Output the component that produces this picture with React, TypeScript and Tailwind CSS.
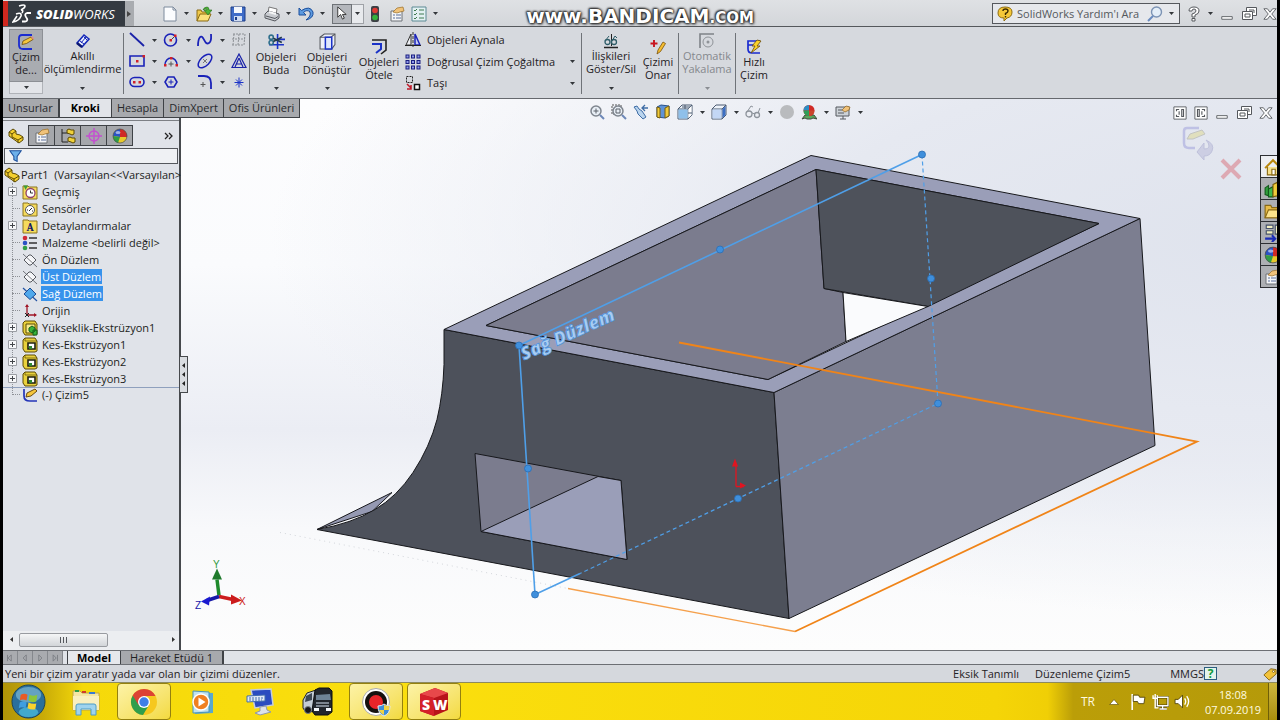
import React from "react";
import { clsx } from "clsx";

type IconProps = { className?: string; children?: React.ReactNode };

const Icon: React.FC<IconProps> = ({ className = "size-4", children }) => (
  <svg viewBox="0 0 16 16" fill="none" className={clsx("shrink-0", className)} aria-hidden="true">
    {children}
  </svg>
);

const Caret: React.FC<{ label: string; className?: string; muted?: boolean }> = ({
  label,
  className = "w-[18px]",
  muted,
}) => (
  <button aria-label={label} className={clsx("flex shrink-0 items-center justify-center", className)}>
    <svg viewBox="0 0 5 3" className="h-[3px] w-[5px]" aria-hidden="true">
      <path d="M0 0h5L2.5 3z" fill={muted ? "#8a8d92" : "#33363a"} />
    </svg>
  </button>
);

const Separator = () => <div className="mx-px my-1 w-px shrink-0 bg-[#6f7378]" />;

/* ---------- Icons ---------- */

const SketchIcon = ({ className }: { className?: string }) => (
  <Icon className={className}>
    <path d="M14 1H4Q1 1 1 4v7q0 4 4 4h9" stroke="#1a2bd0" strokeWidth="1.8" />
    <path d="M4 10.500 5 7 13 3l2 2.500L8.500 9.500z" fill="#f5c63c" stroke="#6f4c08" strokeWidth=".8" />
    <path d="M13 3 15 5.500 16 4.500 14.500 2.300z" fill="#e08a8a" />
  </Icon>
);

const DimensionIcon = () => (
  <Icon>
    <path d="M2 10 9 2l5 4-7 8z" fill="#eef2ff" stroke="#1528b8" strokeWidth="1.6" />
    <path d="m5 8 4 3M9 4l3 3M6 10l5-6" stroke="#1528b8" />
    <path d="m2 10 5 4" stroke="#0c1770" strokeWidth="2.400" />
  </Icon>
);

const sketchTools: { name: string; icon: React.ReactNode; menu: boolean }[] = [
  { name: "Çizgi", menu: true, icon: <Icon><path d="m1 1 14 13" stroke="#1a22a8" strokeWidth="1.8" /></Icon> },
  {
    name: "Daire",
    menu: true,
    icon: (
      <Icon>
        <circle cx="7.500" cy="8" r="6" stroke="#1a22b8" strokeWidth="1.6" />
        <path d="m8 8 4-4" stroke="#444" />
        <path d="M6.500 7h2.500v2.500H6.500zM11 2.500h2.500V5H11z" fill="#d0202a" />
      </Icon>
    ),
  },
  {
    name: "Eğri",
    menu: true,
    icon: <Icon><path d="M1 14C1 5 4 3 6 6s3 7 6 5 2-6 2-9" stroke="#1a22b8" strokeWidth="1.8" /></Icon>,
  },
  {
    name: "Düzlem",
    menu: false,
    icon: (
      <Icon>
        <path d="M2 2h12M1 7h13M1 13h12M3 2 2 13M8 2 7 13M14 2l-1 11" stroke="#8c9095" strokeDasharray="2 1" />
      </Icon>
    ),
  },
  {
    name: "Dikdörtgen",
    menu: true,
    icon: (
      <Icon>
        <path d="M1 3h14v10H1z" stroke="#1a22b8" strokeWidth="1.6" />
        <path d="M7 7h2.500v2.500H7zM13.500 2H16v2.500h-2.500z" fill="#d0202a" />
      </Icon>
    ),
  },
  {
    name: "Yay",
    menu: true,
    icon: (
      <Icon>
        <path d="M2 12a6 7 0 0 1 12 0" stroke="#1a22b8" strokeWidth="1.500" />
        <path d="M1 11h2.500v2.500H1zM12.500 11H15v2.500h-2.500zM7 4h2.500v2.500H7z" fill="#d0202a" />
        <path d="M8 8.500v5M5.500 11h5" stroke="#555" />
      </Icon>
    ),
  },
  {
    name: "Elips",
    menu: true,
    icon: (
      <Icon>
        <ellipse cx="8" cy="8" rx="8.500" ry="4.500" transform="rotate(-45 8 8)" stroke="#1a22b8" strokeWidth="1.500" />
        <path d="m6 6 4 4m0-4-4 4" stroke="#777" />
      </Icon>
    ),
  },
  {
    name: "Metin",
    menu: false,
    icon: (
      <Icon>
        <path d="M8 1 15 14.500H1zM8 5l4 9M8 5l-4 9M5 11h6" stroke="#1a22a8" strokeWidth="1.200" />
      </Icon>
    ),
  },
  {
    name: "Yuva",
    menu: true,
    icon: (
      <Icon>
        <rect x="1" y="3.500" width="14" height="9" rx="4.500" stroke="#1a22b8" strokeWidth="1.600" />
        <path d="M4 7h2.500v2.500H4zM9.500 7H12v2.500H9.500z" fill="#d0202a" />
      </Icon>
    ),
  },
  {
    name: "Çokgen",
    menu: false,
    icon: (
      <Icon>
        <path d="M5 3h6l3 5-3 5H5L2 8z" stroke="#1a22b8" strokeWidth="1.600" />
        <path d="M8 5.500v5M5.500 8h5" stroke="#1a22b8" />
      </Icon>
    ),
  },
  {
    name: "Radyus",
    menu: true,
    icon: (
      <Icon>
        <path d="M1 2h6q7 0 7 7v6" stroke="#1a22b8" strokeWidth="1.800" />
        <path d="M6 8v5M3.500 10.500h5" stroke="#555" />
      </Icon>
    ),
  },
  {
    name: "Nokta",
    menu: false,
    icon: <Icon><path d="M8 3.500v10M3.500 8.500h9M5 5.500l6 6m0-6-6 6" stroke="#1a32c8" /></Icon>,
  },
];

const TrimIcon = () => (
  <Icon className="size-[17px]">
    <path d="M1 11h14M9 1v14M9 6h7" stroke="#1a32c8" strokeWidth="1.500" />
    <circle cx="3" cy="4" r="2" stroke="#2f6f8c" strokeWidth="1.500" />
    <circle cx="3" cy="9" r="2" stroke="#2f6f8c" strokeWidth="1.500" />
    <path d="m5 5 8 4m-8-1 8-4" stroke="#223a4c" strokeWidth="1.500" />
  </Icon>
);

const ConvertIcon = () => (
  <Icon className="size-[17px]">
    <path d="m1 4 4-3h10v10l-3 4H1z" fill="#eef0f8" stroke="#55585e" />
    <path d="M1 4h10v11M11 4l4-3" stroke="#55585e" />
    <path d="M6 4v11h6V4z" fill="#dfe6fb" stroke="#1a32c8" strokeWidth="1.400" />
  </Icon>
);

const OffsetIcon = () => (
  <Icon>
    <path d="M1 1h14v10l-5 4" stroke="#222" strokeWidth="1.600" />
    <path d="M1 5h9v5l-5 4" stroke="#1a32c8" strokeWidth="2" />
  </Icon>
);

const MirrorIcon = () => (
  <Icon>
    <path d="M8 0v16" stroke="#333" strokeDasharray="3 1" />
    <path d="M6 2v11H1z" fill="#eceef2" stroke="#333" />
    <path d="M10 2v11h5z" fill="#c4ccf4" stroke="#1a22b8" strokeWidth="1.500" />
    <path d="M0 13.500h16" stroke="#222" />
  </Icon>
);

const PatternIcon = () => (
  <Icon>
    {[1, 6.5, 12].map((y) =>
      [1, 6.5, 12].map((x) => (
        <rect key={`${x}-${y}`} x={x} y={y} width="3" height="3" fill="#8f98e8" stroke="#1a1f80" />
      )),
    )}
  </Icon>
);

const MoveIcon = () => (
  <Icon>
    <path d="M1.500 1.500h6v6h-6z" stroke="#222" strokeDasharray="2 1" />
    <path d="M9.500 9.500h5v5h-5z" fill="#fff" stroke="#111" strokeWidth="1.500" />
    <path d="m2 9 4 4m0-3v4H2" stroke="#c01828" strokeWidth="1.500" />
  </Icon>
);

const RelationsIcon = () => (
  <Icon>
    <path d="M1 14.500h14" stroke="#222" strokeWidth="1.500" />
    <path d="M8.500 1v12" stroke="#222" />
    <circle cx="4.500" cy="9" r="2.500" stroke="#2f5d68" strokeWidth="1.300" />
    <circle cx="11" cy="9" r="2.500" stroke="#2f5d68" strokeWidth="1.300" />
    <path d="M2 8 6 3M9 8l3-5 2 2" stroke="#2f5d68" />
  </Icon>
);

const RepairIcon = () => (
  <Icon>
    <path d="M4 1v7M.500 4.500h7" stroke="#c8141e" strokeWidth="1.900" />
    <path d="m7 15 1-4 5-8 2.500 1.500-5 8z" fill="#f5bd30" stroke="#7a5208" strokeWidth=".8" />
  </Icon>
);

const SnapIcon = () => (
  <Icon>
    <path d="M1 15V1h14" stroke="#7f8388" strokeWidth="1.600" />
    <circle cx="9" cy="9" r="5" stroke="#8f9398" />
    <circle cx="9" cy="9" r="1.500" fill="#8f9398" />
  </Icon>
);

const RapidIcon = () => (
  <Icon>
    <path d="M14 2H2v8q0 4 4 4h8M2 6h6" stroke="#1a2bd0" strokeWidth="1.700" />
    <path d="M11 1 6 7h3l-4 7 9-7h-3l4-5z" fill="#fbd32a" stroke="#6b4a05" strokeWidth=".8" />
  </Icon>
);

const PartIcon = () => (
  <Icon>
    <path d="m1 4 4-3 3 2v3l4 1 3 2v3l-4 3L1 8z" fill="#f4cf2e" stroke="#5c4a05" />
    <path d="m1 4 3 2 4-3M4 6v3l6 3 5-3M10 12v3" stroke="#5c4a05" />
  </Icon>
);

const PropertyIcon = () => (
  <Icon>
    <path d="M2 5h11v10H2z" fill="#f4f5f7" stroke="#6d7076" />
    <path d="M4 9h2M4 12h2M7 9h5M7 12h5" stroke="#5b6e9a" />
    <path d="m4 6 4-4 6-1 1 4-4 1-3 1z" fill="#f0c27a" stroke="#9a6d24" strokeWidth=".7" />
  </Icon>
);

const ConfigIcon = () => (
  <Icon>
    <path d="M2 1v13h6M2 5h6" stroke="#222" />
    <path d="m7 2 2-1 2 1h3v4l-2 1-2-1-3-1zM8 10l2-1 2 1h3v4l-2 1-2-1-3-1z" fill="#f0d23a" stroke="#5c4a05" />
  </Icon>
);

const DimXpertIcon = () => (
  <Icon>
    <circle cx="8" cy="8" r="5" stroke="#c44fd0" strokeWidth="1.400" />
    <path d="M8 0v16M0 8h16" stroke="#c44fd0" strokeWidth="1.400" />
  </Icon>
);

const BallIcon = ({ className }: { className?: string }) => (
  <Icon className={className}>
    <circle cx="8" cy="8" r="7" fill="#e8c92c" />
    <path d="M8 9 9 1a7 7 0 0 0-8 7z" fill="#2a52c4" />
    <path d="M8 9 8 1a7 7 0 0 1 7 8z" fill="#d02a26" />
    <path d="M8 9 1 8a7 7 0 0 0 5 7z" fill="#2f9e46" />
    <circle cx="8" cy="8" r="7" stroke="#4a4d52" strokeWidth=".7" />
    <ellipse cx="6" cy="4.500" rx="2.500" ry="1.500" fill="#fff" opacity=".55" />
  </Icon>
);

const FolderIcon = ({ children }: { children: React.ReactNode }) => (
  <Icon>
    <path d="M1 4V2h5l1 1h8v12H1z" fill="#f6db5c" stroke="#8a7420" />
    {children}
  </Icon>
);

const HistoryIcon = () => (
  <FolderIcon>
    <circle cx="8.500" cy="9" r="4.500" fill="#fff" stroke="#8e3f6a" strokeWidth="1.300" />
    <path d="M8.500 6.500V9H11" stroke="#333" />
    <path d="M1.500 1.500H6L3.500 6z" fill="#3aa03a" />
  </FolderIcon>
);

const SensorIcon = () => (
  <FolderIcon>
    <circle cx="8" cy="9" r="4.500" fill="#fff" stroke="#555" />
    <path d="m7 10 3-3M5 9h1m4 1h1" stroke="#222" />
  </FolderIcon>
);

const AnnotationIcon = () => (
  <FolderIcon>
    <text x="8" y="13" textAnchor="middle" className="fill-[#111a66] font-serif text-[11px] font-bold">
      A
    </text>
  </FolderIcon>
);

const MaterialIcon = () => (
  <Icon>
    <path d="M7 3h8M7 8h8M7 13h8" stroke="#333" strokeWidth="1.500" />
    <circle cx="3" cy="3" r="2.300" fill="#d02a36" />
    <circle cx="3" cy="8" r="2.300" fill="#2a52c4" />
    <circle cx="3" cy="13" r="2.300" fill="#2f9e46" />
  </Icon>
);

const PlaneIcon = () => (
  <Icon>
    <path d="M7 3h2l5 5-5 5H7L2 8z" fill="#f4f5f8" stroke="#55585e" />
    <path d="m1 2 14 13" stroke="#55585e" strokeWidth=".8" />
    <path d="m6 5 5 5" stroke="#fff" />
  </Icon>
);

const PlaneActiveIcon = () => (
  <Icon>
    <path d="M1 2l14 13" stroke="#2454a4" strokeWidth="1.200" />
    <path d="M8 2 14 8l-6 5.500L2 8z" fill="#4fa8ec" stroke="#1c4c94" />
  </Icon>
);

const OriginIcon = () => (
  <Icon>
    <path d="M5 2v10h9" stroke="#a01828" strokeWidth="1.300" />
    <path d="m3 4 2-3 2 3zM12 10l3 2-3 2z" fill="#a01828" />
    <path d="m3 10 4 4m0-4-4 4" stroke="#222" />
  </Icon>
);

const ExtrudeIcon = () => (
  <Icon>
    <path d="M1 3 3 1h10l2 3v10l-2 1H3l-2-3z" fill="#e9d13c" stroke="#5c4a05" />
    <path d="M4 4h9v9H4z" fill="#f7ea8a" stroke="#5c4a05" />
    <path d="m7 8 3-2 3 2v3l-3 2-3-2zM11 10h4v5h-4z" fill="#38b43a" stroke="#12601a" />
  </Icon>
);

const CutIcon = () => (
  <Icon>
    <path d="M1 3 3 1h10l2 3v10l-2 1H3l-2-3z" fill="#e9d13c" stroke="#5c4a05" />
    <path d="M3 4V1M3 4h12" stroke="#5c4a05" strokeWidth=".7" />
    <path d="M6 6h7v6H6z" fill="#fff" stroke="#1e1e10" strokeWidth="1.600" />
    <path d="M7 9h3v3H7z" fill="#2d8a32" />
  </Icon>
);

const SketchTreeIcon = () => (
  <Icon>
    <path d="M2 2v7q0 5 6 5h7" stroke="#2334b8" strokeWidth="1.700" />
    <path d="m4 10 1-4 8-4 2 2-6 5z" fill="#f5c63c" stroke="#5a3c05" strokeWidth=".9" />
  </Icon>
);

const LensIcon = ({ area }: { area?: boolean }) => (
  <Icon>
    {area && <path d="M1 1h9v9H1z" stroke="#555" strokeDasharray="2 1" />}
    <circle cx="7" cy="7" r="5" fill="#e8eef5" stroke="#7e858e" strokeWidth="1.500" />
    <path d={area ? "M5 5h4v4H5z" : "M7 4.500v5M4.500 7h5"} stroke="#5c626a" />
    <path d="m11 11 4 4" stroke="#6d88b8" strokeWidth="2" />
  </Icon>
);

const PreviousViewIcon = () => (
  <Icon>
    <path d="m1 3 3-1 2 3 3 2 4 6-3 2-5-5-1-3z" fill="#b9d4ee" stroke="#3f6da6" />
    <path d="M15 4H9m3-3L9 4l3 3" stroke="#3f6da6" strokeWidth="1.300" />
  </Icon>
);

const SectionIcon = () => (
  <Icon>
    <path d="m2 3 4-2 8 1v10l-4 2-8-1z" fill="#5f93d8" stroke="#28528c" />
    <path d="M2 3v10l3 1V4zM10 4v10l4-2V2z" fill="#f0cb3c" stroke="#7a5f0c" />
  </Icon>
);

const CubeIcon = ({ framed }: { framed?: boolean }) => (
  <Icon>
    <path d="m1 5 4-4h10v10l-4 4H1z" fill="#eef3fa" stroke="#4b5a70" />
    <path d="M1 5h10v10M11 5l4-4" stroke="#4b5a70" />
    <path d="M1.500 5.500h9v9h-9z" fill={framed ? "#8fc0ea" : "#c3d7f5"} />
    <path d="m11.500 5 3-3v9l-3 3z" fill={framed ? "#fff" : "#3c6fc4"} />
    {framed && <path d="M8 1v4M11 9h4M5 3h8" stroke="#4b5a70" />}
  </Icon>
);

const GlassesIcon = () => (
  <Icon>
    <circle cx="4" cy="10" r="3" stroke="#8d939b" strokeWidth="1.300" />
    <circle cx="12" cy="11" r="2.500" stroke="#8d939b" strokeWidth="1.300" />
    <path d="m2 8 4-6 2 1M7 9l3 1M13 9l2-5" stroke="#8d939b" />
  </Icon>
);

const SceneIcon = () => (
  <Icon>
    <path d="m1 15 3-4h9l3 4-4-1-2 1H6l-2-1z" fill="#5aa65a" stroke="#3f4a3f" />
    <circle cx="8" cy="6.500" r="5.500" fill="#d02a26" />
    <path d="M8 6.500V1a5.500 5.500 0 0 0-5.500 5.500z" fill="#2a8ec4" />
    <path d="M8 6.500H2.500A5.500 5.500 0 0 0 8 12z" fill="#2f9e56" />
    <path d="M8 6.500h5.500A5.500 5.500 0 0 1 8 12z" fill="#c9452c" />
  </Icon>
);

const ViewSettingsIcon = () => (
  <Icon>
    <path d="M1 3h13v9H1zM5 15h6M8 12v3" fill="#cdd2d8" stroke="#55585e" />
    <path d="M3 6h4M3 9h6" stroke="#55585e" />
    <path d="m7 6 4-4 4 1-1 3-4 2z" fill="#f0c27a" stroke="#8a6020" strokeWidth=".7" />
  </Icon>
);

const MinimizeGlyph = () => (
  <Icon className="size-[14px]">
    <path d="M2 11h12v3H2z" fill="#fff" stroke="#55585d" />
  </Icon>
);

const RestoreGlyph = () => (
  <Icon>
    <path d="M5.500 1.500h10v8h-10z" fill="#fff" stroke="#55585d" />
    <path d="M1.500 5.500h10v8h-10z" fill="#fff" stroke="#55585d" />
    <path d="M4 8h5v3H4zM8 4h5v3" stroke="#55585d" />
  </Icon>
);

const CloseGlyph = () => (
  <Icon className="size-[14px]">
    <path d="M1 2h4l3 4 3-4h4l-5 6 5 6h-4l-3-4-3 4H1l5-6z" fill="#fff" stroke="#55585d" />
  </Icon>
);

const PaneGlyph = ({ flip }: { flip?: boolean }) => (
  <Icon className="size-[14px]">
    <path d="M1 1h14v14H1z" fill="#fff" stroke="#55585d" />
    <path
      d={flip ? "M4 4h2v8H4zM9 4h3v2M12 10v2H9M9 6v4" : "M10 4h2v8h-2zM7 4H4v2M4 10v2h3M7 6v4"}
      stroke="#55585d"
      strokeWidth="1.300"
    />
  </Icon>
);

/* ---------- Title bar ---------- */

const quickTools: { name: string; icon: React.ReactNode }[] = [
  {
    name: "Yeni",
    icon: (
      <Icon>
        <path d="M2 1h9l3 3v11H2z" fill="#fbfcfe" stroke="#7d8a9c" />
        <path d="M11 1v3h3" stroke="#7d8a9c" />
      </Icon>
    ),
  },
  {
    name: "Aç",
    icon: (
      <Icon>
        <path d="M1 15V4h4l1 2h7v3" fill="#f0c84a" stroke="#8a6a14" />
        <path d="m1 15 3-7h11l-3 7z" fill="#fbe07a" stroke="#8a6a14" />
        <path d="M7 4q1-3 4-3 2 0 2 3h3l-4 5-4-5h3q0-1-1-1-2 0-3 1z" fill="#4fb53a" stroke="#256a18" strokeWidth=".6" />
      </Icon>
    ),
  },
  {
    name: "Kaydet",
    icon: (
      <Icon>
        <path d="M1 1h14v14H2l-1-1z" fill="#3f6cc8" stroke="#1d3c86" />
        <path d="M4 1h8v6H4z" fill="#f4f7fc" />
        <path d="M4 10h8v5H4z" fill="#cfdcf2" />
        <path d="M5 11h2v3H5z" fill="#1d3c86" />
      </Icon>
    ),
  },
  {
    name: "Yazdır",
    icon: (
      <Icon>
        <path d="m4 7 1-6 8 2-1 6z" fill="#fff" stroke="#777" />
        <path d="m1 8 3-3 11 3v4l-4 3L1 12z" fill="#c9ccd1" stroke="#55585e" />
        <path d="m2 10 9 2.500 3-2" stroke="#55585e" />
        <path d="m5 6 7 2" stroke="#f5f6f7" strokeWidth="2" />
      </Icon>
    ),
  },
  {
    name: "Geri Al",
    icon: (
      <Icon>
        <path d="M1 2v7h7L5.500 6.500Q9 3 12 6q1.500 4-4 8 8-2 7-8Q12-1 3.500 4.500z" fill="#5b9ae0" stroke="#1d4f9c" />
      </Icon>
    ),
  },
];

const TitleBar = () => (
  <header className="relative flex h-[27px] shrink-0 items-center border-b border-[#55585c] bg-gradient-to-b from-[#dfe1e4] to-[#d3d6da] pt-px">
    <div className="flex h-full items-center border-l-[5px] border-[#d0281f] bg-[#343a41] pr-2.5 pl-1 text-white">
      <svg viewBox="0 0 20 20" className="mr-1 size-5" fill="none" aria-hidden="true">
        <path d="M7 2q6-2 6 0 0 2-4 4 3 0 1 3" stroke="#fff" strokeWidth="1.600" />
        <path d="M4 10q6-2 5 2-2 5-8 6l4-6" stroke="#fff" strokeWidth="1.600" />
        <path d="M19 9h-4q-3 1-1 4 3 4-1 4.500h-3" stroke="#fff" strokeWidth="1.800" />
      </svg>
      <span className="font-['Open_Sans',sans-serif] text-[13px] leading-4 font-extrabold italic">
        SOLID<span className="font-medium">WORKS</span>
      </span>
    </div>
    <button aria-label="Menü" className="flex h-full w-[9px] items-center justify-center bg-[#a9acb0]">
      <svg viewBox="0 0 4 6" className="h-1.5 w-1" aria-hidden="true">
        <path d="M0 0v6l4-3z" fill="#444" />
      </svg>
    </button>

    <div className="ml-7 flex items-center">
      {quickTools.map((tool) => (
        <div key={tool.name} className="flex items-center">
          <button aria-label={tool.name}>{tool.icon}</button>
          <Caret label={`${tool.name} seçenekleri`} />
        </div>
      ))}
      <button
        aria-label="Seç"
        className="flex h-5 w-5 items-center justify-center border border-[#6e7277] bg-[#b4b7bc]"
      >
        <Icon className="size-[15px]">
          <path d="M4 1v11l3-3 2 5 2-1-2-4h4z" fill="#fff" stroke="#333" />
        </Icon>
      </button>
      <Caret label="Seçim seçenekleri" className="h-5 w-3 border border-l-0 border-[#9fa2a7] bg-[#e8eaed]" />
      <button aria-label="Yeniden Oluştur" className="ml-[3px]">
        <Icon>
          <rect x="4" y="0" width="8" height="16" rx="2" fill="#3b3f44" />
          <circle cx="8" cy="4.500" r="2.800" fill="#e03a34" />
          <circle cx="8" cy="11.500" r="2.800" fill="#35b13c" />
        </Icon>
      </button>
      <button aria-label="Seçenekler" className="ml-1.5">
        <PropertyIcon />
      </button>
      <button aria-label="Liste" className="ml-1.5">
        <Icon>
          <path d="M1 1h14v14H1z" fill="#e2f0f2" stroke="#5c8a94" />
          <path d="m3 4 1 1 2-2M3 8l1 1 2-2M3 12l1 1 2-2M8 4h5M8 8h5M8 12h5" stroke="#3f7a50" />
        </Icon>
      </button>
      <Caret label="Liste seçenekleri" />
    </div>

    <div className="ml-auto flex items-center">
      <label className="mr-1.5 flex h-[21px] w-[188px] items-center border border-[#55585d] bg-[#e6e8ec] px-1">
        <Icon>
          <path d="M1 7q0-6 7-6t7 5-5 6l-3 3v-3Q1 12 1 7z" fill="#f5c838" stroke="#8f6d10" />
          <path d="M6 5q0-2 2.500-2T11 5q0 1.500-2.500 2.500V9M8.500 10v1.500" stroke="#3d2c00" strokeWidth="1.400" />
        </Icon>
        <input
          aria-label="SolidWorks Yardım'ı Ara"
          placeholder="SolidWorks Yardım'ı Ara"
          className="ml-1 w-[130px] bg-transparent text-[11px] leading-4 outline-none placeholder:text-[#55585d]"
        />
        <Icon>
          <circle cx="9.500" cy="6" r="5" fill="#e4eef8" stroke="#7c93b4" strokeWidth="1.400" />
          <path d="m6 10-5 5" stroke="#6b8cc0" strokeWidth="2" />
        </Icon>
        <Caret label="Arama seçenekleri" className="ml-0.5 w-3" />
      </label>
      <button aria-label="Yardım">
        <Icon>
          <path d="M3 5q0-4 5-4t5 4q0 3-4 4v2H6V8q4-1 4-3T8 3 6 5zM6 12.500h3V15H6z" fill="#fff" stroke="#55585d" />
        </Icon>
      </button>
      <Caret label="Yardım seçenekleri" className="w-4" />
      <button aria-label="Simge durumuna küçült" className="ml-0.5">
        <MinimizeGlyph />
      </button>
      <button aria-label="Önceki boyut" className="ml-[7px]">
        <RestoreGlyph />
      </button>
      <button aria-label="Kapat" className="ml-1.5">
        <CloseGlyph />
      </button>
    </div>

    {/* Recorder watermark */}
    <div className="pointer-events-none absolute inset-x-0 top-1 text-center font-['DejaVu_Sans',sans-serif] text-[20px] leading-6 font-bold text-white [text-shadow:0_0_2px_#222,0_0_3px_#222,1px_1px_3px_#333,-1px_-1px_2px_#444]">
      www.BANDICAM<span className="text-[15px]">.COM</span>
    </div>
  </header>
);

/* ---------- Ribbon ---------- */

type BigToolProps = {
  lines: [string, string];
  icon: React.ReactNode;
  className: string;
  menu?: boolean;
  active?: boolean;
  disabled?: boolean;
};

const BigTool: React.FC<BigToolProps> = ({ lines, icon, className, menu, active, disabled }) => (
  <div className={clsx("flex shrink-0 flex-col text-[11px] leading-[13px]", className)}>
    <button
      disabled={disabled}
      className={clsx(
        "flex h-[53px] flex-col items-center text-center whitespace-nowrap",
        menu ? "pt-1" : "pt-2.5",
        active && "border border-[#8d9095] bg-[#a9acb1]",
        disabled ? "text-[#85888d]" : "text-[#1f2124]",
      )}
    >
      {icon}
      <span>{lines[0]}</span>
      <span>{lines[1]}</span>
    </button>
    {menu && (
      <Caret
        label={`${lines.join(" ")} seçenekleri`}
        muted={disabled}
        className={clsx("h-3 w-full", active && "border border-t-0 border-[#b0b3b8] bg-[#e3e5e9]")}
      />
    )}
  </div>
);

const Ribbon = () => (
  <div className="flex h-[72px] shrink-0 border-b border-[#66696e] bg-[#d6d9de] pt-0.5 pl-1.5">
    <BigTool lines={["Çizim", "de..."]} icon={<SketchIcon className="size-4" />} className="w-[34px]" menu active />
    <BigTool lines={["Akıllı", "ölçümlendirme"]} icon={<DimensionIcon />} className="w-[79px]" menu />
    <Separator />

    <div className="grid grid-cols-[34px_34px_34px_16px] content-between py-[3px] pr-px pb-2 pl-1">
      {sketchTools.map((tool) => (
        <div key={tool.name} className="flex items-center">
          <button aria-label={tool.name}>{tool.icon}</button>
          {tool.menu && <Caret label={`${tool.name} seçenekleri`} />}
        </div>
      ))}
    </div>
    <Separator />

    <BigTool lines={["Objeleri", "Buda"]} icon={<TrimIcon />} className="w-[50px]" menu />
    <BigTool lines={["Objeleri", "Dönüştür"]} icon={<ConvertIcon />} className="w-[52px]" menu />
    <BigTool lines={["Objeleri", "Ötele"]} icon={<OffsetIcon />} className="w-[52px]" />

    <div className="flex w-[175px] flex-col justify-between py-[3px] pr-1 pb-[7px] text-[11px] leading-4 text-[#1f2124]">
      <button className="flex items-center gap-1.5">
        <MirrorIcon /> Objeleri Aynala
      </button>
      <div className="flex justify-between">
        <button className="flex items-center gap-1.5 whitespace-nowrap">
          <PatternIcon /> Doğrusal Çizim Çoğaltma
        </button>
        <Caret label="Çoğaltma seçenekleri" className="w-2" />
      </div>
      <div className="flex justify-between">
        <button className="flex items-center gap-1.5">
          <MoveIcon /> Taşı
        </button>
        <Caret label="Taşıma seçenekleri" className="w-2" />
      </div>
    </div>
    <Separator />

    <BigTool lines={["İlişkileri", "Göster/Sil"]} icon={<RelationsIcon />} className="w-[56px]" menu />
    <BigTool lines={["Çizimi", "Onar"]} icon={<RepairIcon />} className="w-[38px]" />
    <Separator />
    <BigTool lines={["Otomatik", "Yakalama"]} icon={<SnapIcon />} className="w-[54px]" menu disabled />
    <Separator />
    <BigTool lines={["Hızlı", "Çizim"]} icon={<RapidIcon />} className="w-[34px]" />
  </div>
);

const commandTabs = ["Unsurlar", "Kroki", "Hesapla", "DimXpert", "Ofis Ürünleri"];

const CommandTabs = () => (
  <nav className="absolute top-0 left-0 z-10 flex h-[19px] border-r border-b border-[#3f4246] text-[11px] leading-4">
    {commandTabs.map((tab) =>
      tab === "Kroki" ? (
        <button key={tab} className="-mb-px border-x border-b border-[#3f4246] bg-[#e2e4e9] px-[11px] font-bold text-black">
          {tab}
        </button>
      ) : (
        <button
          key={tab}
          className="border-r border-[#3f4246] bg-[#a7a9ad] px-[5px] text-[#26282b] last:border-r-0"
        >
          {tab}
        </button>
      ),
    )}
  </nav>
);

/* ---------- Feature tree ---------- */

type TreeItem = { label: string; icon: React.ReactNode; expandable?: boolean; selected?: boolean };

const treeItems: TreeItem[] = [
  { label: "Geçmiş", icon: <HistoryIcon />, expandable: true },
  { label: "Sensörler", icon: <SensorIcon /> },
  { label: "Detaylandırmalar", icon: <AnnotationIcon />, expandable: true },
  { label: "Malzeme <belirli değil>", icon: <MaterialIcon /> },
  { label: "Ön Düzlem", icon: <PlaneIcon /> },
  { label: "Üst Düzlem", icon: <PlaneIcon />, selected: true },
  { label: "Sağ Düzlem", icon: <PlaneActiveIcon />, selected: true },
  { label: "Orijin", icon: <OriginIcon /> },
  { label: "Yükseklik-Ekstrüzyon1", icon: <ExtrudeIcon />, expandable: true },
  { label: "Kes-Ekstrüzyon1", icon: <CutIcon />, expandable: true },
  { label: "Kes-Ekstrüzyon2", icon: <CutIcon />, expandable: true },
  { label: "Kes-Ekstrüzyon3", icon: <CutIcon />, expandable: true },
];

const TreeRow: React.FC<{ item: TreeItem }> = ({ item }) => (
  <li className="flex h-[17px] items-center">
    <span className="flex h-full w-[19px] items-center">
      {item.expandable ? (
        <button aria-label={`${item.label} genişlet`} className="ml-[5px]">
          <svg viewBox="0 0 9 9" className="size-[9px]" fill="none" aria-hidden="true">
            <path d="M.5.500h8v8h-8z" fill="#f7f8fa" stroke="#9a9da3" />
            <path d="M2 4.500h5M4.500 2v5" stroke="#44474c" />
          </svg>
        </button>
      ) : (
        <span className="ml-[9px] w-2 border-t border-dotted border-[#8d9096]" />
      )}
    </span>
    {item.icon}
    <button
      className={clsx(
        "ml-[3px] h-[15px] px-px whitespace-nowrap",
        item.selected && "bg-[#3793ec] text-white",
      )}
    >
      {item.label}
    </button>
  </li>
);

const panelTabs = [
  { name: "Unsur ağacı", icon: <PartIcon /> },
  { name: "Özellikler", icon: <PropertyIcon /> },
  { name: "Konfigürasyon", icon: <ConfigIcon /> },
  { name: "DimXpert", icon: <DimXpertIcon /> },
  { name: "Görünüm", icon: <BallIcon /> },
];

const FeaturePanel = () => (
  <aside className="relative flex w-[178px] shrink-0 flex-col border-r-2 border-[#46494d] bg-[#e0e3e9] pt-[19px] text-[11px] leading-[15px] text-[#1c1e21]">
    <div className="mt-0.5 border-t border-[#7d8085] pt-1">
      <div className="flex h-[21px] items-center">
        {panelTabs.map((tab, i) => (
          <button
            key={tab.name}
            aria-label={tab.name}
            className={clsx(
              "flex h-full w-[26px] items-center justify-center border-r border-[#3f4246]",
              i > 0 && "border-y bg-[#a5a7ab]",
            )}
          >
            {tab.icon}
          </button>
        ))}
        <button aria-label="Diğer sekmeler" className="ml-auto flex h-4 items-center px-1.5">
          <svg viewBox="0 0 9 8" className="h-2 w-[9px]" fill="none" aria-hidden="true">
            <path d="m1 1 3 3-3 3M5 1l3 3-3 3" stroke="#222" strokeWidth="1.300" />
          </svg>
        </button>
      </div>
      <label className="mx-px mt-0.5 flex h-4 items-center border border-[#55585d] bg-[#eff1f4] px-1">
        <Icon className="size-[13px]">
          <path d="M1 1h14L10 8v6l-4-2V8z" fill="#6cb0ea" stroke="#1c4f9c" strokeWidth="1.300" />
        </Icon>
        <input aria-label="Filtre" className="min-w-0 flex-1 bg-transparent outline-none" />
      </label>
    </div>

    <div className="min-h-0 flex-1 pt-0.5">
      <div className="flex h-[17px] items-center pl-px">
        <PartIcon />
        <button className="ml-px whitespace-pre">{"Part1  (Varsayılan<<Varsayılan>"}</button>
      </div>
      <div className="relative">
        <div className="absolute top-0 bottom-2 left-[9px] border-l border-dotted border-[#8d9096]" />
        <ul className="relative">
          {treeItems.map((item) => (
            <TreeRow key={item.label} item={item} />
          ))}
        </ul>
        <div className="h-px bg-[#8fa0bd]" />
        <ul className="relative -mt-0.5">
          <TreeRow item={{ label: "(-) Çizim5", icon: <SketchTreeIcon /> }} />
        </ul>
      </div>
    </div>

    <div className="flex h-[19px] items-center bg-[#eceef1] pb-0.5">
      <button aria-label="Sola kaydır" className="flex w-4 items-center justify-center">
        <svg viewBox="0 0 3 5" className="h-[5px] w-[3px]" aria-hidden="true">
          <path d="M3 0v5L0 2.500z" fill="#333" />
        </svg>
      </button>
      <div className="flex h-3.5 w-[89px] items-center justify-center gap-0.5 rounded-xs border border-[#989ba0] bg-gradient-to-b from-[#f5f6f7] to-[#d2d5d9]">
        <i className="h-1.5 w-px bg-[#55585d]" />
        <i className="h-1.5 w-px bg-[#55585d]" />
        <i className="h-1.5 w-px bg-[#55585d]" />
      </div>
      <button aria-label="Sağa kaydır" className="ml-auto flex w-3 items-center justify-center">
        <svg viewBox="0 0 3 5" className="h-[5px] w-[3px]" aria-hidden="true">
          <path d="M0 0v5l3-2.500z" fill="#333" />
        </svg>
      </button>
    </div>

    {/* Panel splitter */}
    <button
      aria-label="Paneli daralt"
      className="absolute top-[257px] -right-[9px] z-10 flex h-[37px] w-2 flex-col items-center justify-around border border-l-0 border-[#46494d] bg-[#d9dce1] py-1"
    >
      {[0, 1, 2].map((n) => (
        <svg key={n} viewBox="0 0 3 5" className="h-[5px] w-[3px]" aria-hidden="true">
          <path d="M3 0v5L0 2.500z" fill="#222" />
        </svg>
      ))}
    </button>
  </aside>
);

/* ---------- Graphics area ---------- */

const handles = [
  [519, 346],
  [720, 250],
  [922, 155],
  [931, 279],
  [938, 404],
  [738, 499],
  [535, 595],
  [528, 469],
];

const Model = () => (
  <svg
    viewBox="181 99 1096 552"
    preserveAspectRatio="xMidYMid slice"
    className="absolute inset-0 h-full w-full"
    fill="none"
    role="img"
    aria-label="Part1"
  >
    <g stroke="#17181c" strokeLinejoin="round">
      <path d="M317 530 392 493 372 512z" fill="#9599b2" />
      <path
        d="M444 330 774 393 789 619 317 530Q352 524 375 510 397 497 413 473 430 447 437 420 443 395 444 365z"
        fill="#4d515b"
      />
      <path d="M774 393 1140 219 1155 446 789 619z" fill="#7c7e90" />
      <path
        d="M811 156 1140 219 774 393 444 330zM816 170 486 326 768 380 1099 224z"
        fill="#9a9eb8"
        fillRule="evenodd"
      />
      <path d="M816 170 486 326 768 380 846 342 843 293 824 289z" fill="#7b7c8e" />
      <path d="M816 170 1099 224 928 307 824 289z" fill="#4e525b" />
      <path d="M843 293 928 307 846 342z" fill="#fafbfd" />
      <path d="M475 454 621 481 627 560 481 532z" fill="#7b7c8e" />
      <path d="M481 532 598 477 621 481 627 560z" fill="#9a9eb8" />
    </g>

    <path d="M280 533 568 589" stroke="#d4d7dc" strokeDasharray="1 4" />
    <path d="M679 343 1197 442 795 632" stroke="#f08418" strokeWidth="1.800" />
    <path d="M795 632 568 589" stroke="#f5a04c" strokeWidth="1.300" />

    <g stroke="#4f9fe8" strokeWidth="1.600">
      <path d="M922 155 519 346 535 595 580 574" />
      <path d="M922 155 938 404 580 574" strokeWidth="1.200" strokeDasharray="4 3" />
    </g>
    {handles.map(([cx, cy]) => (
      <circle key={`${cx}-${cy}`} cx={cx} cy={cy} r="3.500" fill="#3f8fdc" stroke="#2b6db4" strokeWidth=".8" />
    ))}
    <text
      transform="translate(524 361) rotate(-24)"
      className="fill-[#a9cdf2] stroke-[#4f93dc] font-['Open_Sans',sans-serif] text-[18px] font-extrabold italic"
      strokeWidth=".8"
    >
      Sağ Düzlem
    </text>

    <path d="M736 487V464M736 487H744" stroke="#e01420" strokeWidth="1.300" />
    <path d="m732 467 3-8 3 8zM740 483l6 3-6 3z" fill="#e01420" />

    {/* Axis triad */}
    <path d="m219 596-2-16" stroke="#1f8a2c" strokeWidth="3.500" />
    <path d="m212 580 5-11 5 11z" fill="#1f7a2c" />
    <path d="m219 597 14 3" stroke="#cc1c1c" strokeWidth="3.500" />
    <path d="m231 595 11 6-11 4z" fill="#cc1c1c" />
    <path d="m219 597-12 4" stroke="#1818a8" strokeWidth="3.500" />
    <path d="m210 597-9 5 8 4z" fill="#1a1ad0" />
    <g className="font-['Liberation_Sans',sans-serif] text-[10px]">
      <text x="213" y="568" fill="#2f9a3c">Y</text>
      <text x="239" y="605" fill="#cc1c1c">X</text>
      <text x="195" y="609" fill="#1818a8">Z</text>
    </g>
  </svg>
);

const viewTools: { name: string; icon: React.ReactNode; menu?: boolean }[] = [
  { name: "Ekrana sığdır", icon: <LensIcon /> },
  { name: "Alana yaklaştır", icon: <LensIcon area /> },
  { name: "Önceki görünüm", icon: <PreviousViewIcon /> },
  { name: "Kesit görünümü", icon: <SectionIcon /> },
  { name: "Görünüm yönü", icon: <CubeIcon framed />, menu: true },
  { name: "Görüntü stili", icon: <CubeIcon />, menu: true },
  { name: "Gizle göster", icon: <GlassesIcon />, menu: true },
  {
    name: "Görünümü düzenle",
    icon: (
      <Icon>
        <circle cx="8" cy="8" r="7" fill="#b9bbbe" />
      </Icon>
    ),
  },
  { name: "Sahne", icon: <SceneIcon />, menu: true },
  { name: "Görünüm ayarları", icon: <ViewSettingsIcon />, menu: true },
];

const taskTabs = [
  {
    name: "Kaynaklar",
    icon: (
      <Icon className="size-[18px]">
        <path d="M3 8v7h10V8" fill="#f7e08a" stroke="#8a6a14" />
        <path d="m1 9 7-7 7 7" stroke="#b8860b" strokeWidth="1.800" />
        <path d="M7 10h3v5H7z" fill="#fff" stroke="#8a6a14" />
      </Icon>
    ),
  },
  {
    name: "Tasarım kitaplığı",
    icon: (
      <Icon className="size-[18px]">
        <path d="m1 7 3-2v9l-3-1z" fill="#2f9e3c" stroke="#145a1c" />
        <path d="m4 8 4-2v9H4z" fill="#3fb84c" stroke="#145a1c" />
        <path d="m8 4 4-2v12l-4 1z" fill="#f0cb3c" stroke="#7a5f0c" />
      </Icon>
    ),
  },
  {
    name: "Dosya gezgini",
    icon: (
      <Icon className="size-[18px]">
        <path d="M1 14V3h5l1 2h7v9z" fill="#e9bd48" stroke="#8a6a14" />
        <path d="m1 14 3-7h12l-2 7z" fill="#fbe28c" stroke="#8a6a14" />
      </Icon>
    ),
  },
  {
    name: "Görünüm paleti",
    icon: (
      <Icon className="size-[18px]">
        <path d="M2 1h6v3H2zM2 6h6v3H2zM10 1h5v8h-5z" fill="#f3f0c0" stroke="#44506a" />
        <path d="M1 13h9m-3-3 3 3-3 3" stroke="#1a2bb8" strokeWidth="1.800" />
      </Icon>
    ),
  },
  { name: "Görünümler", icon: <BallIcon className="size-[18px]" /> },
  { name: "Özel özellikler", icon: <PropertyIcon /> },
];

const GraphicsArea = () => (
  <main className="relative min-w-0 flex-1 overflow-hidden bg-[linear-gradient(to_bottom,#fdfdfe_0%,#fafbfd_30%,#ebedf4_60%,#f8f9fb_78%,#fdfdfd_100%)]">
    <div className="absolute inset-0 bg-[radial-gradient(ellipse_at_100%_25%,#dfe3ed_0%,#e6e9f1_30%,transparent_65%)]" />
    <Model />

    <div className="absolute inset-x-0 top-[5px] flex items-center justify-center">
      {viewTools.map((tool) => (
        <div key={tool.name} className="flex items-center">
          <button aria-label={tool.name} className={clsx(tool.menu ? "mr-0" : "mr-1.5")}>
            {tool.icon}
          </button>
          {tool.menu && <Caret label={`${tool.name} seçenekleri`} />}
        </div>
      ))}
    </div>

    <div className="absolute top-[6px] right-1 flex items-center gap-[7px]">
      <button aria-label="Sol bölme"><PaneGlyph /></button>
      <button aria-label="Sağ bölme"><PaneGlyph flip /></button>
      <button aria-label="Belgeyi küçült"><MinimizeGlyph /></button>
      <button aria-label="Belgeyi önceki boyuta getir"><RestoreGlyph /></button>
      <button aria-label="Belgeyi kapat"><CloseGlyph /></button>
    </div>

    {/* Confirmation corner */}
    <button aria-label="Çizimden çık" className="absolute top-[26px] right-[62px] opacity-30">
      <svg viewBox="0 0 34 36" className="h-9 w-[34px]" fill="none" aria-hidden="true">
        <path d="M18 3H6Q3 3 3 6v12q0 5 5 5h6" stroke="#6c6ccc" strokeWidth="2.500" />
        <path d="m6 14 3-5 12-4 3 4-12 5z" fill="#dcd04c" stroke="#77775a" />
        <path d="M25 15q9 4 6 11-2 5-8 5v4l-7-8 7-9v6q5 0 5-3 0-3-3-6z" fill="#9a9ac8" stroke="#6c6cae" />
      </svg>
    </button>
    <button aria-label="İptal" className="absolute top-[59px] right-[35px] opacity-40">
      <svg viewBox="0 0 22 22" className="size-[22px]" fill="none" aria-hidden="true">
        <path d="m2 2 18 18m0-18L2 20" stroke="#d8505c" strokeWidth="4" />
      </svg>
    </button>

    {/* Task pane */}
    <div className="absolute top-14 right-0 flex w-[17px] flex-col border-t border-l border-[#2d2f33]">
      {taskTabs.map((tab, i) => (
        <button
          key={tab.name}
          aria-label={tab.name}
          className={clsx(
            "flex h-[22px] items-center overflow-hidden border-b border-[#2d2f33] pl-[3px]",
            i === 0 ? "bg-[#eceef2]" : "bg-[#adafb3]",
          )}
        >
          {tab.icon}
        </button>
      ))}
    </div>
  </main>
);

/* ---------- Bottom bars ---------- */

const SheetTabs = () => (
  <div className="flex h-[15px] shrink-0 border-y border-[#6c6f74] bg-[#e0e3e8] text-[11px] leading-3">
    {["M10 3 5 8l5 5zM4 3v10", "M10 3 5 8l5 5z", "m6 3 5 5-5 5z", "m5 3 5 5-5 5zM12 3v10"].map((d, i) => (
      <button
        key={i}
        aria-label={`Sayfa ${i + 1}`}
        disabled
        className="flex w-[15px] items-center justify-center border-r border-[#85888d] bg-[#a9abaf]"
      >
        <Icon className="size-2.5">
          <path d={d} stroke="#7c7f84" strokeWidth="1.500" />
        </Icon>
      </button>
    ))}
    <button className="ml-1 border-x border-[#3f4246] bg-[#e6e8ec] px-[9px] font-bold text-black">Model</button>
    <button className="border-r-2 border-[#3f4246] bg-[#a7a9ad] px-[9px] text-[#1f2124]">Hareket Etüdü 1</button>
  </div>
);

const StatusBar = () => (
  <footer className="flex h-[18px] shrink-0 items-center border-b border-[#8d8a5c] bg-[#d5d8dd] pl-0.5 text-[11px] leading-4 text-[#1f2124]">
    <span>Yeni bir çizim yaratır yada var olan bir çizimi düzenler.</span>
    <span className="ml-auto">Eksik Tanımlı</span>
    <span className="ml-4">Düzenleme Çizim5</span>
    <span className="ml-10">MMGS</span>
    <button
      aria-label="Yardım"
      className="flex size-[13px] items-center justify-center border border-[#2b5d80] bg-[#e3f4ec] text-[12px] leading-3 font-bold text-[#119a3a]"
    >
      ?
    </button>
    <button aria-label="Etiketler" className="ml-[46px]">
      <Icon className="size-[14px]">
        <path d="m1 9 8-7 6 1v5l-8 7z" fill="#f2c23a" stroke="#80600c" />
        <circle cx="12" cy="5" r="1.200" fill="#fff" stroke="#80600c" />
      </Icon>
    </button>
  </footer>
);

const taskbarApps: { name: string; running?: boolean; icon: React.ReactNode }[] = [
  {
    name: "Dosya Gezgini",
    icon: (
      <svg viewBox="0 0 32 28" className="h-7 w-8" fill="none" aria-hidden="true">
        <path d="M3 22V3h7l2 2h17v17z" fill="#f4e6a4" stroke="#c0a448" />
        <path d="M5 3h4" stroke="#2f9e46" strokeWidth="2" />
        <path d="M12 4h4" stroke="#d03a2c" strokeWidth="2" />
        <path d="M19 5h6" stroke="#3a7ad0" strokeWidth="2" />
        <path d="M3 8h26v14H3z" fill="#f9efbe" />
        <path d="M6 27v-9q0-2 2-2h16q2 0 2 2v9h-5v-6H11v6z" fill="#9fd3ee" stroke="#4e9cc4" />
      </svg>
    ),
  },
  {
    name: "Chrome",
    running: true,
    icon: (
      <svg viewBox="0 0 28 28" className="size-7" aria-hidden="true">
        <circle cx="14" cy="14" r="13" fill="#f6c81e" />
        <path d="M14 14 2.700 7.500A13 13 0 0 0 13 27l6-10z" fill="#2f9e4c" />
        <path d="M2.700 7.500A13 13 0 0 1 25.500 8H14l-5.500 9z" fill="#dc4234" />
        <circle cx="14" cy="14" r="6" fill="#fff" />
        <circle cx="14" cy="14" r="4.700" fill="#3f7fe8" />
      </svg>
    ),
  },
  {
    name: "Media Player",
    icon: (
      <svg viewBox="0 0 28 28" className="size-7" aria-hidden="true">
        <path d="m7 4 18 1v20L7 26z" fill="#5aa8cc" />
        <path d="m5 3 16 1v20L5 25z" fill="#bfe2f0" stroke="#4b94b8" />
        <circle cx="13" cy="14" r="8" fill="#f08020" stroke="#fff" strokeWidth="1.500" />
        <path d="m10.500 9.500 7 4.500-7 4.500z" fill="#fff" />
      </svg>
    ),
  },
  {
    name: "Ekran Klavyesi",
    icon: (
      <svg viewBox="0 0 30 28" className="h-7 w-[30px]" aria-hidden="true">
        <path d="m6 2 20-1 2 16-18 3z" fill="#2a4cc0" stroke="#c6cede" strokeWidth="1.500" />
        <path d="m2 8 18-1v6L2 14z" fill="#dfe8f6" stroke="#3f6cae" />
        <path d="M4 10h14M4 12h13" stroke="#3f6cae" strokeDasharray="2 1" />
        <path d="m15 19 6-1 1 4 4 2-11 3-5-2 5-2z" fill="#dde2ea" stroke="#8f98a8" />
      </svg>
    ),
  },
  {
    name: "Truck Simulator",
    icon: (
      <svg viewBox="0 0 32 30" className="h-[30px] w-8" aria-hidden="true">
        <path d="m1 13 4-7 9-3v22L3 24l-2-3z" fill="#c4ccd4" stroke="#20242a" />
        <path d="m4 9 6-3v7l-7 2z" fill="#3d4854" />
        <path d="m13 3 4-2h10l3 3v21l-4 3H13l-3-4z" fill="#22262c" stroke="#0c0e10" />
        <path d="m14 8 14-1 1 6H14z" fill="#6f8496" />
        <path d="M14 16h13M14 19h13" stroke="#9aa4ae" strokeWidth="1.500" />
        <path d="M12 21h5v3h-5zM24 21h5v3h-5z" fill="#f4f7fa" />
        <circle cx="6" cy="23" r="3.500" fill="#15171a" stroke="#7b8088" />
      </svg>
    ),
  },
  {
    name: "Bandicam",
    running: true,
    icon: (
      <svg viewBox="0 0 30 30" className="size-[30px]" aria-hidden="true">
        <circle cx="15" cy="15" r="13.500" fill="#fff" stroke="#aaa" />
        <circle cx="15" cy="15" r="11" fill="#15110f" />
        <circle cx="15" cy="15" r="7" fill="#e8242a" />
        <path d="M17 19q4 0 6-2 2 2 6 2 0 8-6 10-6-2-6-10z" fill="#3c8ed8" stroke="#e8eef4" />
        <path d="M23 18v5h5l.5-4q-3.500 0-5.500-1zM23 23v5q-4-2-5-5z" fill="#f0d244" />
      </svg>
    ),
  },
  {
    name: "SolidWorks",
    running: true,
    icon: (
      <svg viewBox="0 0 30 30" className="size-[30px]" aria-hidden="true">
        <path d="M1 7 16 1l13 5v17l-14 6-14-5z" fill="#b8141a" />
        <path d="M1 7 16 1l13 5-14 5z" fill="#e8484a" />
        <path d="M1 7v17l14 5V11z" fill="#d4202a" />
        <g className="fill-white font-['Open_Sans',sans-serif] text-[14px] font-extrabold">
          <text x="3" y="23">S</text>
          <text x="14" y="23">W</text>
        </g>
      </svg>
    ),
  },
];

const Taskbar = () => (
  <div className="flex h-[37px] shrink-0 items-center bg-[linear-gradient(to_right,#b09408_0,#c9ab08_40px,#f5d90a_80px,#fbdf0e_30%,#f5d507_78%,#f0cf06_82%,#bb9e08_84%,#b59a0a_100%)]">
    <button aria-label="Başlat" className="ml-2 shrink-0">
      <svg viewBox="0 0 36 36" className="size-[35px]" aria-hidden="true">
        <circle cx="18" cy="18" r="17" fill="#2a6f9c" stroke="#1c4258" />
        <ellipse cx="18" cy="11" rx="13" ry="8" fill="#8cc4dc" opacity=".6" />
        <ellipse cx="18" cy="29" rx="10" ry="5" fill="#54d0ec" opacity=".6" />
        <path d="M10 11q4-2 7 0l-1 6q-4-2-7 0z" fill="#ea5a24" />
        <path d="M19 11q4 2 8 0l-1 7q-4 2-8-1z" fill="#8cc63a" />
        <path d="M9 19q3-2 7 0l-1 6q-4-2-7 0z" fill="#3f9ee0" />
        <path d="M18 19q4 2 8 1l-1 6q-4 1-8-1z" fill="#fbd22c" />
      </svg>
    </button>
    <div className="ml-[13px] flex h-full gap-1">
      {taskbarApps.map((app) => (
        <button
          key={app.name}
          aria-label={app.name}
          className={clsx(
            "flex h-full w-[54px] items-center justify-center",
            app.running && "rounded-sm border border-[#94800f] bg-gradient-to-br from-[#fdf3a6] to-[#f3da3c]",
          )}
        >
          {app.icon}
        </button>
      ))}
    </div>

    <div className="ml-auto flex items-center text-[#fffbe0]">
      <span className="text-[12px] leading-4">TR</span>
      <button aria-label="Gizli simgeler" className="ml-3.5">
        <Icon className="size-2.5">
          <path d="m1 12 7-8 7 8z" fill="#fff" stroke="#5c4c04" />
        </Icon>
      </button>
      <button aria-label="İşlem merkezi" className="ml-2.5">
        <Icon className="size-[17px]">
          <path d="M3 1v15" stroke="#fff" strokeWidth="1.500" />
          <path d="M4 2h5l1 2h5l-1 6H9L8 8H4z" fill="#fff" stroke="#4c3f04" strokeWidth=".8" />
        </Icon>
      </button>
      <button aria-label="Ağ" className="ml-1.5">
        <Icon className="size-[17px]">
          <path d="M5 4h10v8H5zM7 15h7M10 12v3" stroke="#4c3f04" strokeWidth="2.500" />
          <path d="M5 4h10v8H5zM7 15h7M10 12v3M3 1v4M1 2v3h4V2M3 5v9h3" stroke="#fff" strokeWidth="1.300" />
        </Icon>
      </button>
      <button aria-label="Ses" className="ml-[5px]">
        <Icon className="size-[17px]">
          <path d="M1 6h3l4-4v12l-4-4H1z" fill="#fff" stroke="#4c3f04" strokeWidth=".8" />
          <path d="M10 5q2 3 0 6M12 3q3.500 5 0 10" stroke="#fff" strokeWidth="1.300" />
        </Icon>
      </button>
      <div className="ml-3.5 text-center text-[11px] leading-[15px]">
        <div>18:08</div>
        <div>07.09.2019</div>
      </div>
    </div>
    <button
      aria-label="Masaüstünü göster"
      className="ml-[7px] h-full w-[9px] shrink-0 border-l border-[#6f5e08] bg-gradient-to-b from-[#cdb63c] to-[#a88e0a]"
    />
  </div>
);

const App: React.FC = () => (
  <div className="flex h-screen flex-col overflow-hidden border-x-[3px] border-black bg-[#d6d9de] font-['Open_Sans','Noto_Sans',sans-serif]">
    <TitleBar />
    <Ribbon />
    <div className="relative flex min-h-0 flex-1">
      <CommandTabs />
      <FeaturePanel />
      <GraphicsArea />
    </div>
    <SheetTabs />
    <StatusBar />
    <Taskbar />
  </div>
);

export default App;
